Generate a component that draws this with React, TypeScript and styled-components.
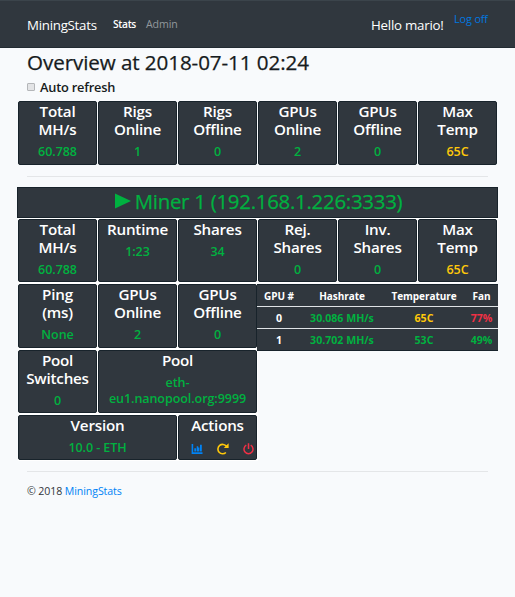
import React from "react";
import styled, { createGlobalStyle } from "styled-components";

const green = "#00b140";
const yellow = "#ffc80a";
const red = "#f03045";
const blue = "#0083f5";

const GlobalStyle = createGlobalStyle`
  * { box-sizing: border-box; }
  body {
    margin: 0;
    background: #f8fafc;
    color: #161b20;
    font-family: "Open Sans", "Noto Sans", sans-serif;
    overflow: hidden;
  }
  h1, h2, h3, p { margin: 0; }
`;

const Page = styled.div`
  height: 597px;
  overflow: hidden;
`;

const Navbar = styled.nav`
  display: flex;
  height: 48px;
  padding: 0 27px;
  background: #30373e;
  border-top: 1px solid #3b444b;
  border-bottom: 1px solid #222b32;
  color: #fff;
  white-space: nowrap;
`;

const Brand = styled.a`
  width: 86px;
  font-size: 13.3px;
  line-height: 48px;
  letter-spacing: -0.27px;
`;

const NavItem = styled.a<{ $active?: boolean }>`
  width: 33px;
  font-size: ${(p) => (p.$active ? "10.2px" : "10.6px")};
  line-height: 46px;
  letter-spacing: ${(p) => (p.$active ? "-0.3px" : "-0.1px")};
  font-weight: ${(p) => (p.$active ? 600 : 400)};
  color: ${(p) => (p.$active ? "#fff" : "#92979c")};
`;

const Greeting = styled.span`
  margin-left: auto;
  width: 83px;
  font-size: 13.3px;
  line-height: 48px;
  letter-spacing: -0.24px;
`;

const LogOff = styled.a`
  width: 34px;
  font-size: 10.8px;
  line-height: 36px;
  letter-spacing: -0.1px;
  color: #0078e0;
`;

const Heading = styled.h1`
  height: 32px;
  padding-left: 27px;
  font-size: 20.6px;
  font-weight: 400;
  line-height: 28px;
  letter-spacing: -0.08px;
  white-space: nowrap;
  -webkit-text-stroke: 0.25px currentColor;
`;

const RefreshLabel = styled.label`
  display: flex;
  align-items: center;
  gap: 5px;
  height: 13px;
  padding-left: 27px;
  font-size: 12.8px;
  font-weight: 600;
  line-height: 12px;
  letter-spacing: -0.2px;
`;

const CheckBox = styled.span`
  width: 8px;
  height: 8px;
  border: 1px solid #b4b6b9;
  border-radius: 1px;
  background: #e3e4e6;
`;

const SummaryGrid = styled.section`
  display: grid;
  grid-template-columns: repeat(6, 80px);
  grid-auto-rows: 66px;
  margin: 7px 0 0 18px;
`;

const Divider = styled.hr`
  height: 1px;
  margin: 10px 27px 0;
  border: 0;
  background: #e4e6e8;
`;

const Miner = styled.section`
  width: 480px;
  margin: 10px 0 0 18px;
`;

const MinerTitle = styled.h2`
  display: flex;
  align-items: center;
  justify-content: center;
  gap: 4px;
  height: 31px;
  margin-left: -1px;
  padding: 0 0 3px 2px;
  border: 1px solid #18232b;
  background: #30373e;
  color: ${green};
  font-size: 20.4px;
  font-weight: 400;
  line-height: 26px;
  letter-spacing: -0.25px;
  white-space: nowrap;
  -webkit-text-stroke: 0.25px currentColor;
`;

const StatsRow = styled.div`
  display: grid;
  grid-template-columns: repeat(6, 80px);
  grid-auto-rows: 65px;
  background: #fff;
`;

const Details = styled.div`
  display: flex;
  align-items: flex-start;
`;

const DetailsGrid = styled.div`
  display: grid;
  grid-template-columns: repeat(3, 80px);
  grid-template-rows: 66px 65px 47px;
  background: #fff;
`;

const Card = styled.article<{ $span?: number }>`
  grid-column: span ${(p) => p.$span ?? 1};
  margin: 0.5px 1px 1px 0;
  border: 1px solid #18232b;
  border-radius: 2px;
  background: #30373e;
  text-align: center;
  overflow: hidden;
`;

const CardTitle = styled.h3`
  color: #fff;
  font-size: 15.2px;
  font-weight: 600;
  line-height: 18.7px;
  letter-spacing: -0.22px;
  white-space: pre-line;
`;

const CardValue = styled.p<{ $color?: string }>`
  margin-top: 5.5px;
  color: ${(p) => p.$color ?? green};
  font-size: 12.5px;
  font-weight: 600;
  line-height: 16px;
  letter-spacing: -0.06px;
  white-space: pre-line;
`;

const Actions = styled.div`
  display: flex;
  justify-content: space-between;
  margin: 9px 2px 0 12px;
`;

const GpuTable = styled.table`
  width: 241px;
  margin: 1px 0 0 -1px;
  border-collapse: collapse;
  table-layout: fixed;
  background: #30373e;
  color: #fff;
  font-size: 10.6px;
  font-weight: 700;
  text-align: center;
  white-space: nowrap;
  border: 1px solid #18232b;
  border-width: 1px 0;
`;

const TableRow = styled.tr`
  height: 22px;
  & + &, tbody & { border-top: 1px solid #dfe3e6; }
`;

const Cell = styled.td<{ $color?: string; $width?: number }>`
  width: ${(p) => (p.$width ? `${p.$width}px` : "auto")};
  padding: 0;
  color: ${(p) => p.$color ?? "#fff"};
  line-height: 20px;
`;

const HeadCell = styled(Cell)`
  font-size: 10px;
  letter-spacing: -0.05px;
`;

const Footer = styled.footer`
  padding: 11px 27px;
  font-size: 10.6px;
  line-height: 16px;
  letter-spacing: -0.1px;
  color: #30353a;
`;

const FooterLink = styled.a`
  color: ${blue};
`;

type Stat = { title: string; value: string; color?: string; span?: number };

const summary: Stat[] = [
  { title: "Total\nMH/s", value: "60.788" },
  { title: "Rigs\nOnline", value: "1" },
  { title: "Rigs\nOffline", value: "0" },
  { title: "GPUs\nOnline", value: "2" },
  { title: "GPUs\nOffline", value: "0" },
  { title: "Max\nTemp", value: "65C", color: yellow },
];

const minerStats: Stat[] = [
  { title: "Total\nMH/s", value: "60.788" },
  { title: "Runtime", value: "1:23" },
  { title: "Shares", value: "34" },
  { title: "Rej.\nShares", value: "0" },
  { title: "Inv.\nShares", value: "0" },
  { title: "Max\nTemp", value: "65C", color: yellow },
];

const detailStats: Stat[] = [
  { title: "Ping\n(ms)", value: "None" },
  { title: "GPUs\nOnline", value: "2" },
  { title: "GPUs\nOffline", value: "0" },
  { title: "Pool\nSwitches", value: "0" },
  { title: "Pool", value: "eth-\neu1.nanopool.org:9999", span: 2 },
  { title: "Version", value: "10.0 - ETH", span: 2 },
];

const gpus = [
  { id: 0, rate: "30.086 MH/s", temp: "65C", tempColor: yellow, fan: "77%", fanColor: red },
  { id: 1, rate: "30.702 MH/s", temp: "53C", tempColor: green, fan: "49%", fanColor: green },
];

const StatCard = ({ title, value, color, span }: Stat) => (
  <Card $span={span}>
    <CardTitle>{title}</CardTitle>
    <CardValue $color={color}>{value}</CardValue>
  </Card>
);

const PlayIcon = () => (
  <svg width="16" height="16" viewBox="0 0 16 16">
    <path d="M0 0.5 16 8 0 15.5Z" fill={green} />
  </svg>
);

const ChartIcon = () => (
  <svg width="12" height="12" viewBox="0 0 12 12" fill={blue}>
    <path d="M0.6 1h1.6v8.3h9.3V11H0.6zM3.3 5.3h1.8v3.2H3.3zM5.7 3.2h1.5v5.3H5.7zM7.2 4.6h1.2v3.9H7.2zM9 1.8h1.8v6.7H9z" />
  </svg>
);

const RefreshIcon = () => (
  <svg width="12" height="12" viewBox="0 0 12 12" fill="none">
    <path d="M8.9 9.5A4.7 4.7 0 1 1 9.4 3.3" stroke={yellow} strokeWidth="1.6" />
    <path d="M11.6 0.3V5H6.8Z" fill={yellow} />
  </svg>
);

const PowerIcon = () => (
  <svg width="11" height="12" viewBox="0 0 11 12" fill="none" stroke={red} strokeWidth="1.5">
    <path d="M3.3 2.2a4.5 4.5 0 1 0 4.4 0M5.5 0.3v5.6" />
  </svg>
);

export default function App() {
  return (
    <Page>
      <GlobalStyle />
      <Navbar>
        <Brand>MiningStats</Brand>
        <NavItem $active>Stats</NavItem>
        <NavItem>Admin</NavItem>
        <Greeting>Hello mario!</Greeting>
        <LogOff>Log off</LogOff>
      </Navbar>
      <Heading>Overview at 2018-07-11 02:24</Heading>
      <RefreshLabel>
        <CheckBox role="checkbox" aria-checked="false" />
        Auto refresh
      </RefreshLabel>
      <SummaryGrid>
        {summary.map((s) => <StatCard key={s.title} {...s} />)}
      </SummaryGrid>
      <Divider />
      <Miner>
        <MinerTitle><PlayIcon />Miner 1 (192.168.1.226:3333)</MinerTitle>
        <StatsRow>
          {minerStats.map((s) => <StatCard key={s.title} {...s} />)}
        </StatsRow>
        <Details>
          <DetailsGrid>
            {detailStats.map((s) => <StatCard key={s.title} {...s} />)}
            <Card>
              <CardTitle>Actions</CardTitle>
              <Actions><ChartIcon /><RefreshIcon /><PowerIcon /></Actions>
            </Card>
          </DetailsGrid>
          <GpuTable>
            <thead>
              <TableRow>
                <HeadCell as="th" $width={44}>GPU #</HeadCell>
                <HeadCell as="th" $width={82}>Hashrate</HeadCell>
                <HeadCell as="th" $width={82}>Temperature</HeadCell>
                <HeadCell as="th" $width={33}>Fan</HeadCell>
              </TableRow>
            </thead>
            <tbody>
              {gpus.map((g) => (
                <TableRow key={g.id}>
                  <Cell>{g.id}</Cell>
                  <Cell $color={green}>{g.rate}</Cell>
                  <Cell $color={g.tempColor}>{g.temp}</Cell>
                  <Cell $color={g.fanColor}>{g.fan}</Cell>
                </TableRow>
              ))}
            </tbody>
          </GpuTable>
        </Details>
      </Miner>
      <Divider />
      <Footer>© 2018 <FooterLink>MiningStats</FooterLink></Footer>
    </Page>
  );
}
